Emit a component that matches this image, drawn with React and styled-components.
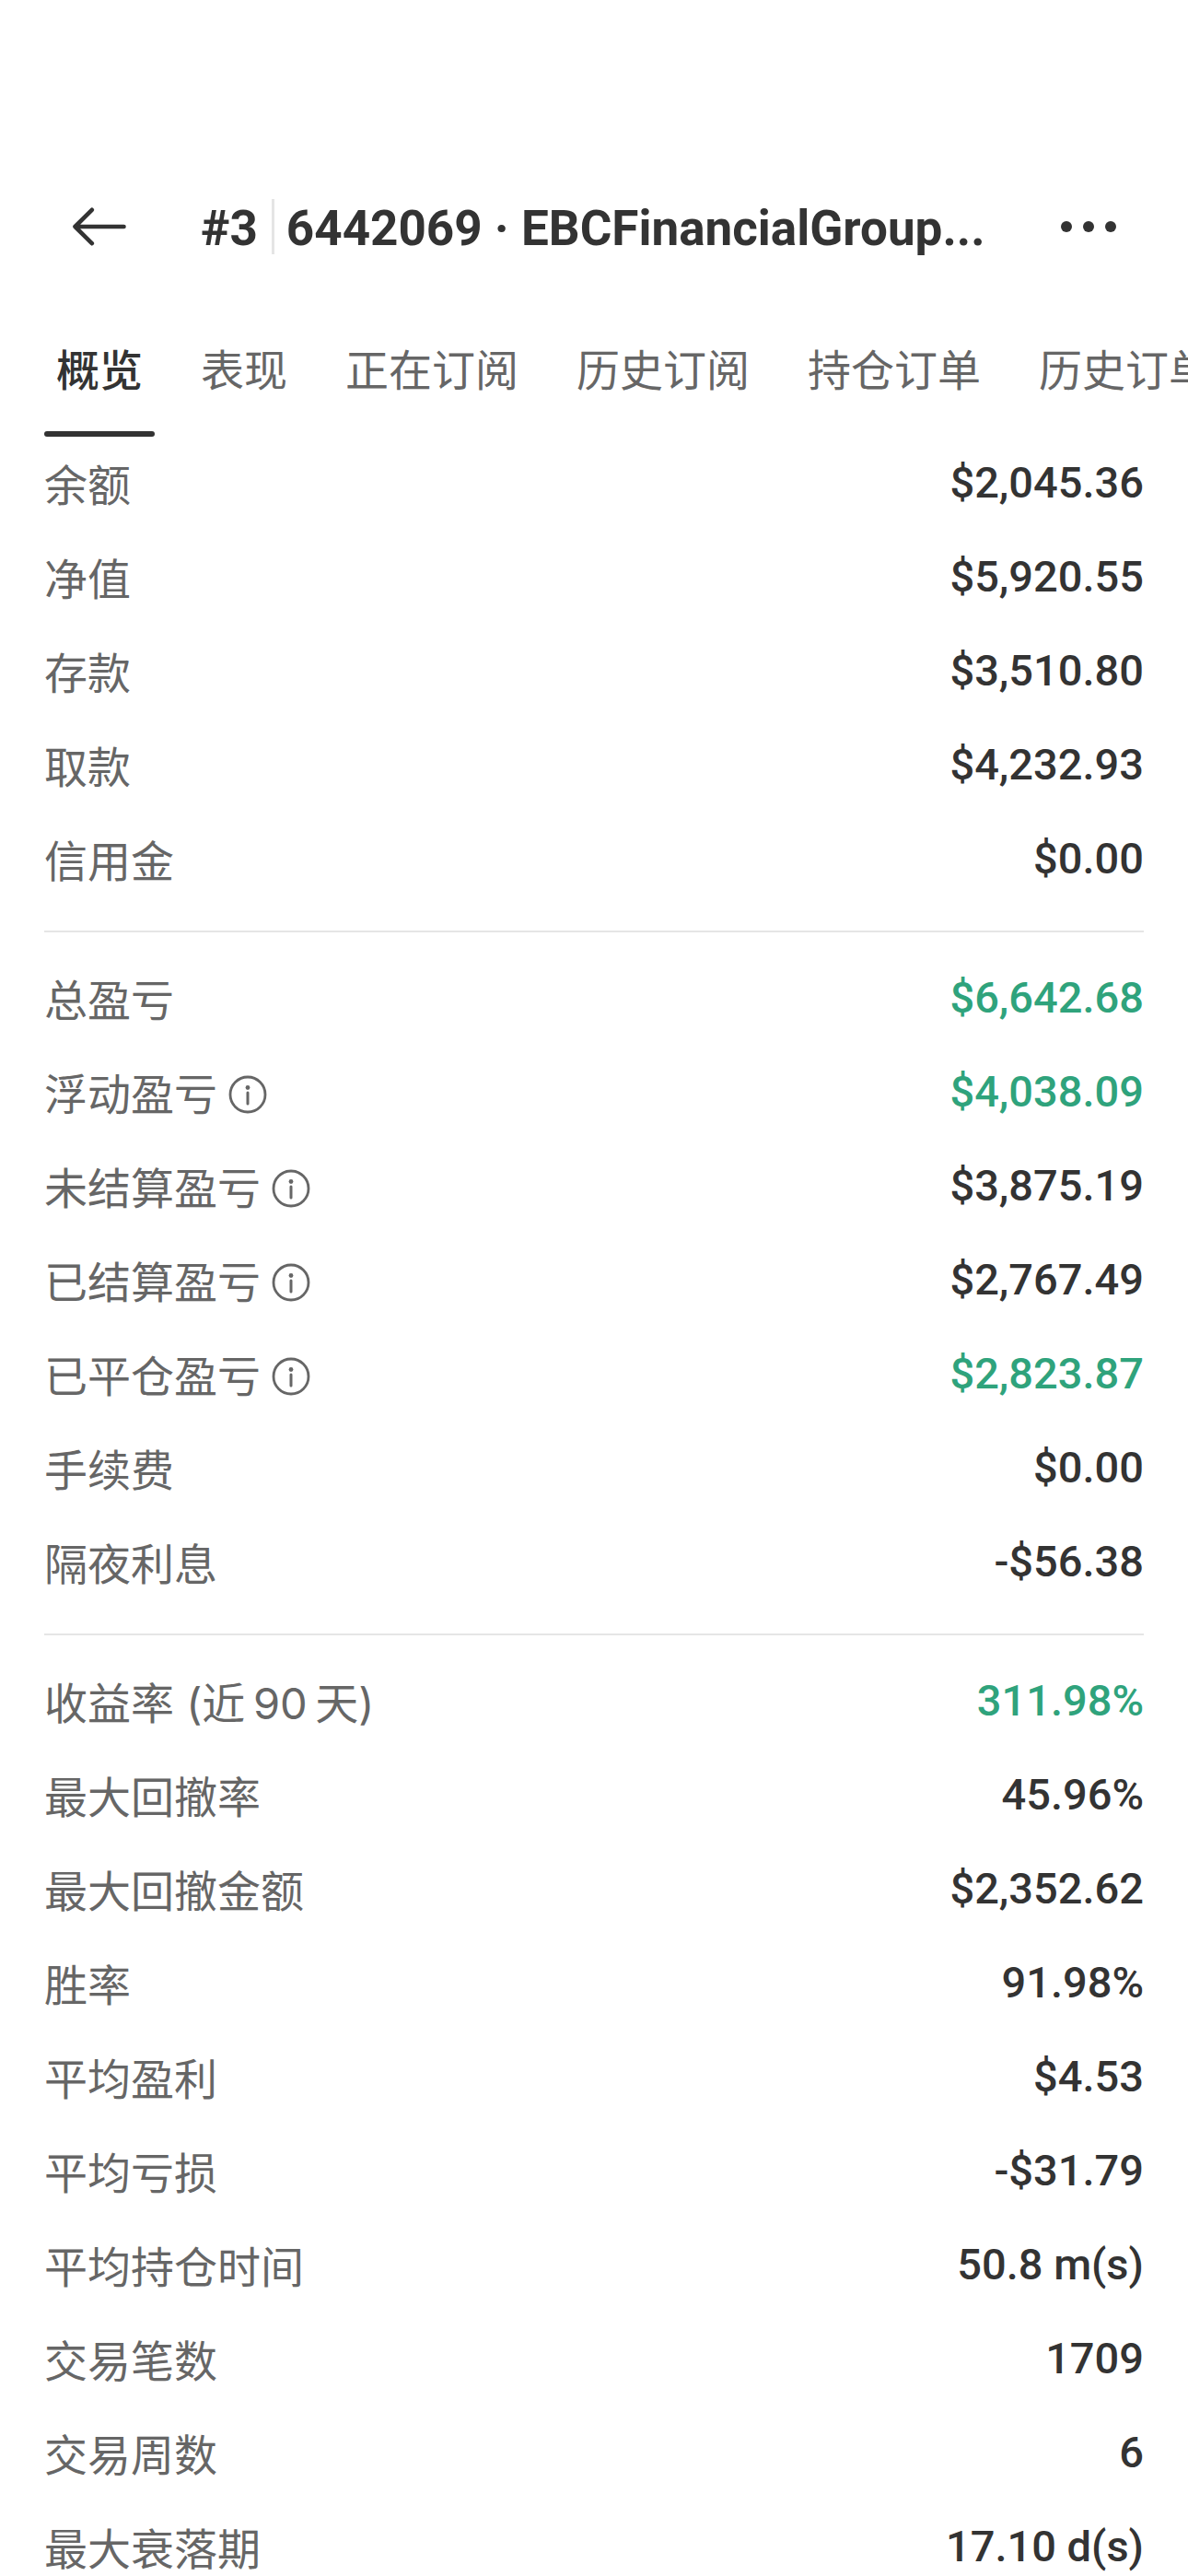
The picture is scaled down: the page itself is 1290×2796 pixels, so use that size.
import React, { useState } from 'react';
import styled, { createGlobalStyle } from 'styled-components';

const GlobalStyle = createGlobalStyle`
* {
  box-sizing: border-box;
}

body {
  margin: 0;
  background-color: #fff;
  color: #333;
  font-family: Inter, "Noto Sans CJK SC", sans-serif;
}

button {
  padding: 0;
  border: none;
  background: none;
  color: inherit;
  font: inherit;
  cursor: pointer;
}
`;

const Page = styled.div`
min-height: 100vh;
padding-top: 186px;
overflow: hidden;
`;

const Header = styled.header`
display: flex;
align-items: center;
height: 120px;
padding: 0 48px;
`;

const IconButton = styled.button`
display: flex;
flex: none;
align-items: center;
justify-content: center;
width: 120px;
height: 120px;
`;

const Title = styled.h1`
display: flex;
flex: 1;
align-items: center;
min-width: 0;
margin: 0;
padding: 0 0 0 50px;
font-family: Roboto, "Noto Sans CJK SC", sans-serif;
font-size: 53px;
font-weight: 700;
line-height: 60px;
white-space: nowrap;
`;

const TitleText = styled.span`
padding-top: 4px;
`;

const Separator = styled.span`
width: 3px;
height: 60px;
margin: 0 13px 0 15px;
background-color: #e5e5e5;
`;

const Tabs = styled.nav`
display: flex;
gap: 37px;
height: 144px;
margin-top: 24px;
padding: 0 48px;
overflow: hidden;
`;

const Tab = styled.button`
flex: none;
height: 144px;
padding: 0 13px;
color: ${props => (props.$active ? '#333' : '#666')};
font-size: 47px;
font-weight: ${props => (props.$active ? 500 : 400)};
line-height: 144px;
position: relative;

&::after {
  content: '';
  display: ${props => (props.$active ? 'block' : 'none')};
  position: absolute;
  right: 0;
  bottom: 0;
  left: 0;
  height: 6px;
  border-radius: 3px;
  background-color: #333;
}
`;

const Content = styled.main`
padding: 3px 48px 0;
`;

const Group = styled.dl`
margin: 0;

& + & {
  margin-top: 23px;
  padding-top: 24px;
  border-top: 2px solid #e5e5e5;
}
`;

const Row = styled.div`
display: flex;
align-items: flex-start;
justify-content: space-between;
height: 102px;
padding-top: 15px;
`;

const Label = styled.dt`
display: flex;
align-items: center;
gap: 12px;
color: #666;
font-size: 47px;
line-height: 70px;
`;

const Value = styled.dd`
margin: 0;
color: ${props => (props.$gain ? '#2fa37c' : '#333')};
font-family: Roboto, "Noto Sans CJK SC", sans-serif;
font-size: 47px;
font-weight: 500;
line-height: 64px;
`;

const InfoButton = styled.button`
display: flex;
width: 42px;
height: 42px;
`;

const tabs = ['概览', '表现', '正在订阅', '历史订阅', '持仓订单', '历史订单'];

const groups = [
  [
    { label: '余额', value: '$2,045.36' },
    { label: '净值', value: '$5,920.55' },
    { label: '存款', value: '$3,510.80' },
    { label: '取款', value: '$4,232.93' },
    { label: '信用金', value: '$0.00' }
  ],
  [
    { label: '总盈亏', value: '$6,642.68', gain: true },
    { label: '浮动盈亏', value: '$4,038.09', gain: true, info: true },
    { label: '未结算盈亏', value: '$3,875.19', info: true },
    { label: '已结算盈亏', value: '$2,767.49', info: true },
    { label: '已平仓盈亏', value: '$2,823.87', gain: true, info: true },
    { label: '手续费', value: '$0.00' },
    { label: '隔夜利息', value: '-$56.38' }
  ],
  [
    { label: '收益率 (近\u200990\u2009天)', value: '311.98%', gain: true },
    { label: '最大回撤率', value: '45.96%' },
    { label: '最大回撤金额', value: '$2,352.62' },
    { label: '胜率', value: '91.98%' },
    { label: '平均盈利', value: '$4.53' },
    { label: '平均亏损', value: '-$31.79' },
    { label: '平均持仓时间', value: '50.8 m(s)' },
    { label: '交易笔数', value: '1709' },
    { label: '交易周数', value: '6' },
    { label: '最大衰落期', value: '17.10 d(s)' }
  ]
];

const BackIcon = () => (
  <svg width="60" height="60" viewBox="0 0 60 60" fill="none" stroke="#333" strokeWidth="4.600" strokeLinecap="round" strokeLinejoin="round">
    <path d="M56.500 30H3.500M21.800 11.800L3.500 30L21.800 48.200" />
  </svg>
);

const MoreIcon = () => (
  <svg width="60" height="60" viewBox="0 0 60 60" fill="#333">
    <circle cx="6" cy="30" r="6" />
    <circle cx="30" cy="30" r="6" />
    <circle cx="54" cy="30" r="6" />
  </svg>
);

const InfoIcon = () => (
  <svg width="42" height="42" viewBox="0 0 42 42" fill="none" stroke="#666">
    <circle cx="21" cy="21" r="19" strokeWidth="2.8" />
    <circle cx="21" cy="13.5" r="2.4" fill="#666" stroke="none" />
    <path d="M21 19V31" strokeWidth="3" strokeLinecap="round" />
  </svg>
);

const App = () => {
  const [activeTab, setActiveTab] = useState(0);

  return (
    <Page>
      <GlobalStyle />
      <Header>
        <IconButton aria-label="返回">
          <BackIcon />
        </IconButton>
        <Title>
          <TitleText>#3</TitleText>
          <Separator />
          <TitleText>6442069 · EBCFinancialGroup...</TitleText>
        </Title>
        <IconButton aria-label="更多">
          <MoreIcon />
        </IconButton>
      </Header>
      <Tabs>
        {tabs.map((tab, index) => (
          <Tab key={tab} $active={index === activeTab} onClick={() => setActiveTab(index)}>
            {tab}
          </Tab>
        ))}
      </Tabs>
      <Content>
        {groups.map((rows, index) => (
          <Group key={index}>
            {rows.map(row => (
              <Row key={row.label}>
                <Label>
                  {row.label}
                  {row.info && (
                    <InfoButton aria-label={`${row.label}说明`}>
                      <InfoIcon />
                    </InfoButton>
                  )}
                </Label>
                <Value $gain={row.gain}>{row.value}</Value>
              </Row>
            ))}
          </Group>
        ))}
      </Content>
    </Page>
  );
};

export default App;
